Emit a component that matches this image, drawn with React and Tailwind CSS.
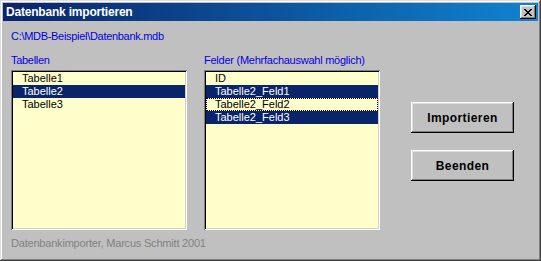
import React from "react";

const font = { fontFamily: '"Liberation Sans", Arial, sans-serif' };

function ListBox({ items, className }) {
  return (
    <div
      className={`h-[160px] w-[176px] bg-[#ffffcc] p-[2px] shadow-[inset_1px_1px_#808080,inset_-1px_-1px_#ffffff,inset_2px_2px_#000000,inset_-2px_-2px_#d4d0c8] ${className || ""}`}
    >
      {items.map((it) => (
        <div
          key={it.label}
          className={`h-[13px] pl-[9px] text-[11px] leading-[13px] whitespace-nowrap ${
            it.selected ? "bg-[#0a246a] text-white" : "text-black"
          } ${it.focus ? "outline outline-1 outline-dotted outline-black -outline-offset-1" : ""}`}
        >
          {it.label}
        </div>
      ))}
    </div>
  );
}

function Button({ children }) {
  return (
    <div className="flex h-[31px] w-[103px] items-center justify-center bg-[#c0c0c0] text-[12px] font-bold tracking-[0.4px] text-black shadow-[inset_-1px_-1px_#000000,inset_1px_1px_#ffffff,inset_-2px_-2px_#808080,inset_2px_2px_#dfdfdf]">
      {children}
    </div>
  );
}

export default function App() {
  return (
    <div
      style={font}
      className="flex h-[261px] w-[541px] flex-col bg-[#c0c0c0] p-[3px] shadow-[inset_-1px_-1px_#404040,inset_1px_1px_#dfdfdf,inset_-2px_-2px_#808080,inset_2px_2px_#ffffff]"
    >
      <div className="flex h-[18px] items-center justify-between bg-gradient-to-r from-[#0a246a] to-[#1084d0] pl-[3px] pr-[2px]">
        <span className="text-[12px] font-bold tracking-[-0.2px] text-white leading-[18px]">Datenbank importieren</span>
        <div className="flex h-[14px] w-[16px] items-center justify-center bg-[#c0c0c0] shadow-[inset_-1px_-1px_#000000,inset_1px_1px_#ffffff,inset_-2px_-2px_#808080,inset_2px_2px_#dfdfdf]">
          <svg width="8" height="7" viewBox="0 0 8 7">
            <path d="M0 0h2v1h1v1h2V1h1V0h2v1H7v1H6v1H5v1h1v1h1v1h1v1H6V6H5V5H3v1H2v1H0V6h1V5h1V4h1V3H2V2H1V1H0z" fill="#000" />
          </svg>
        </div>
      </div>

      <div className="flex flex-1 flex-col pl-[8px]">
        <div className="mt-[9px] h-[13px] text-[11px] tracking-[-0.3px] leading-[13px] text-[#0000e0]">
          C:\MDB-Beispiel\Datenbank.mdb
        </div>

        <div className="mt-[11px] flex">
          <div className="flex flex-col">
            <div className="h-[13px] text-[11px] tracking-[-0.3px] leading-[13px] text-[#0000e0]">Tabellen</div>
            <ListBox
              className="mt-[3px]"
              items={[
                { label: "Tabelle1" },
                { label: "Tabelle2", selected: true },
                { label: "Tabelle3" },
              ]}
            />
          </div>

          <div className="ml-[17px] flex flex-col">
            <div className="h-[13px] text-[11px] tracking-[-0.25px] leading-[13px] text-[#0000e0]">
              Felder (Mehrfachauswahl möglich)
            </div>
            <ListBox
              className="mt-[3px]"
              items={[
                { label: "ID" },
                { label: "Tabelle2_Feld1", selected: true },
                { label: "Tabelle2_Feld2", focus: true },
                { label: "Tabelle2_Feld3", selected: true },
              ]}
            />
          </div>

          <div className="ml-[31px] mt-[48px] flex flex-col gap-[17px]">
            <Button>Importieren</Button>
            <Button>Beenden</Button>
          </div>
        </div>

        <div className="mt-[7px] h-[13px] text-[11px] tracking-[-0.2px] leading-[13px] text-[#808080]">
          Datenbankimporter, Marcus Schmitt 2001
        </div>
      </div>
    </div>
  );
}
